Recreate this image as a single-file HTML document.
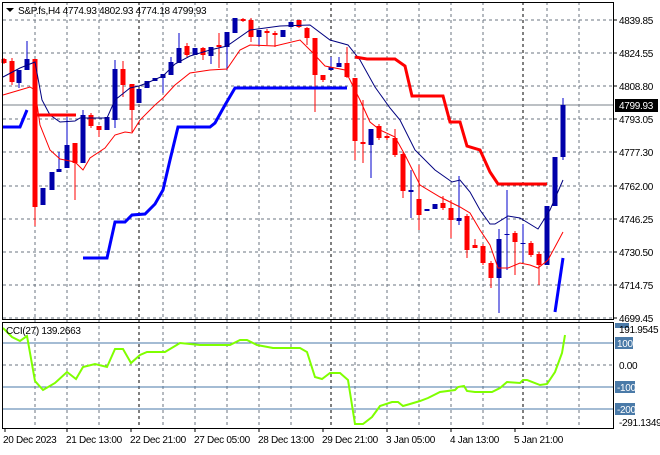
<!DOCTYPE html><html><head><style>
body{margin:0;background:#fff;width:660px;height:450px;overflow:hidden;font-family:"Liberation Sans",sans-serif}
svg text{font-family:"Liberation Sans",sans-serif;font-size:10px;letter-spacing:-0.3px}
</style></head><body>
<svg width="660" height="450" xmlns="http://www.w3.org/2000/svg">
<rect width="660" height="450" fill="#fff"/>
<g stroke="#6b7480" stroke-dasharray="3,3" stroke-width="1">
<path d="M3 20H613M3 53H613M3 86H613M3 119H613M3 152H613M3 186H613M3 219H613M3 252H613M3 285H613M3 318H613M3 365H613"/>
<path d="M35 2V428M67 2V428M99 2V428M163 2V428M195 2V428M227 2V428M259 2V428M291 2V428M355 2V428M387 2V428M419 2V428M451 2V428M483 2V428M547 2V428M579 2V428"/>
</g>
<g stroke="#000" stroke-dasharray="3,3"><path d="M139 2V428M331 2V428M523 2V428"/></g>
<g stroke="#4a7aa8"><path d="M3 343H613M3 387H613M3 409H613"/></g>
<path d="M3 105H613" stroke="#7a8088"/>
<g stroke-width="1">
<g fill="#f00" stroke="#f00">
<path d="M4 58V64M12 58V85M35 59V226M75 143V200M91 113V128M99 126V137M123 61V97M132 84V132M187 43V57M203 47V60M219 33V68M243 18V22M251 18V42M267 29V45M275 31V47M299 20V28M307 27V45M315 38V112M323 75V82M347 47V78M355 78V160M363 100V163M379 124V140M387 135V140M395 129V157M403 152V198M419 165V230M443 196V210M451 200V238M467 214V258M475 239V248M483 244V265M491 261V288M515 231V275M531 241V257M539 252V285"/>
</g>
<g fill="#f00">
<rect x="1.5" y="59" width="5" height="4"/><rect x="9.5" y="61" width="5" height="21"/><rect x="32.5" y="59" width="5" height="148"/><rect x="72.5" y="143" width="5" height="20"/><rect x="88.5" y="115" width="5" height="11"/><rect x="96.5" y="126" width="5" height="4"/><rect x="120.5" y="69" width="5" height="16"/><rect x="129.5" y="84" width="5" height="26"/><rect x="184.5" y="46" width="5" height="9"/><rect x="200.5" y="48" width="5" height="7"/><rect x="216.5" y="45" width="5" height="2"/><rect x="240.5" y="19" width="5" height="2"/><rect x="248.5" y="20" width="5" height="17"/><rect x="264.5" y="31" width="5" height="2"/><rect x="272.5" y="33" width="5" height="2"/><rect x="296.5" y="20" width="5" height="7"/><rect x="304.5" y="28" width="5" height="10"/><rect x="312.5" y="38" width="5" height="37"/><rect x="320.5" y="75" width="5" height="5"/><rect x="344.5" y="63" width="5" height="14"/><rect x="352.5" y="78" width="5" height="63"/><rect x="360.5" y="142" width="5" height="2"/><rect x="376.5" y="126" width="5" height="12"/><rect x="384.5" y="136" width="5" height="2"/><rect x="392.5" y="138" width="5" height="17"/><rect x="400.5" y="154" width="5" height="37"/><rect x="416.5" y="199" width="5" height="16"/><rect x="440.5" y="203" width="5" height="5"/><rect x="448.5" y="208" width="5" height="12"/><rect x="464.5" y="216" width="5" height="34"/><rect x="472.5" y="245" width="5" height="3"/><rect x="480.5" y="246" width="5" height="17"/><rect x="488.5" y="263" width="5" height="15"/><rect x="512.5" y="233" width="5" height="9"/><rect x="528.5" y="243" width="5" height="12"/><rect x="536.5" y="254" width="5" height="11"/>
</g>
<g stroke="#0000cc">
<path d="M19 70V88M27 41V70M43 188V205M52 172V190M59 152V172M67 117V168M83 110V163M107 117V130M115 60V128M139 89V103M147 81V88M155 78V80M163 74V93M171 57V75M179 33V63M195 48V55M211 47V64M227 32V70M235 18V33M259 30V46M283 30V37M291 22V27M331 57V70M339 57V66M371 129V178M411 170V218M427 209V211M435 204V209M459 176V225M499 229V313M507 190V270M523 224V262M547 206V265M555 157V206M563 98V160"/>
</g>
<g fill="#0000aa">
<rect x="16.5" y="70" width="5" height="13"/><rect x="24.5" y="59" width="5" height="11"/><rect x="40.5" y="188" width="5" height="17"/><rect x="49.5" y="172" width="5" height="18"/><rect x="56.5" y="169" width="5" height="3"/><rect x="64.5" y="145" width="5" height="23"/><rect x="80.5" y="115" width="5" height="48"/><rect x="104.5" y="117" width="5" height="13"/><rect x="112.5" y="69" width="5" height="51"/><rect x="136.5" y="89" width="5" height="14"/><rect x="144.5" y="81" width="5" height="7"/><rect x="152.5" y="78" width="5" height="3"/><rect x="160.5" y="74" width="5" height="4"/><rect x="168.5" y="62" width="5" height="13"/><rect x="176.5" y="48" width="5" height="15"/><rect x="192.5" y="48" width="5" height="7"/><rect x="208.5" y="47" width="5" height="9"/><rect x="224.5" y="32" width="5" height="15"/><rect x="232.5" y="18" width="5" height="15"/><rect x="256.5" y="30" width="5" height="7"/><rect x="280.5" y="30" width="5" height="7"/><rect x="288.5" y="22" width="5" height="5"/><rect x="328.5" y="67" width="5" height="3"/><rect x="336.5" y="63" width="5" height="4"/><rect x="368.5" y="129" width="5" height="16"/><rect x="408.5" y="190" width="5" height="2"/><rect x="424.5" y="209" width="5" height="2"/><rect x="432.5" y="204" width="5" height="5"/><rect x="456.5" y="218" width="5" height="3"/><rect x="496.5" y="239" width="5" height="39"/><rect x="504.5" y="234" width="5" height="1"/><rect x="520.5" y="243" width="5" height="1"/><rect x="544.5" y="206" width="5" height="59"/><rect x="552.5" y="157" width="5" height="49"/><rect x="560.5" y="105" width="5" height="52"/>
</g>
</g>
<polyline fill="none" stroke="#000080" stroke-width="1" points="3,77 20,68 35,62 42,100 50,115 60,122 75,121 80,118 107,118 115,100 130,88 139,86 147,83 163,76 175,64 190,56 210,50 227,46 250,30 280,26 310,25 330,40 348,45 360,60 375,87 390,108 400,120 415,150 435,170 452,182 460,180 470,192 480,210 490,224 495,224 508,216 520,218 538,229 550,210 563,180"/>
<polyline fill="none" stroke="#f00" stroke-width="1" points="3,95 20,90 30,87 35,90 40,125 50,150 60,159 75,162 83,170 90,158 105,148 115,135 125,132 132,133 140,120 155,105 163,98 175,85 190,73 210,70 227,69 240,50 250,45 275,46 300,40 312,52 325,66 345,70 360,100 370,122 380,130 395,137 405,155 420,185 440,197 460,207 470,213 480,230 490,245 498,268 508,268 520,263 530,265 538,268 548,260 563,232"/>
<polyline fill="none" stroke="#f00" stroke-width="3" points="35,115 76,115"/>
<polyline fill="none" stroke="#f00" stroke-width="3" points="355,57 367,59 395,59 405,66 412,96 443,96 450,122 460,122 467,146 480,150 490,172 498,184 547,184"/>
<polyline fill="none" stroke="#0000ff" stroke-width="3" points="3,127 20,127 27,110"/>
<polyline fill="none" stroke="#0000ff" stroke-width="3" points="83,258 107,258 115,222 125,222 132,215 145,214 155,204 163,190 170,160 178,127 210,127 215,123 225,105 235,88 347,88"/>
<polyline fill="none" stroke="#0000ff" stroke-width="3" points="555,312 563,258"/>
<polyline fill="none" stroke="#7fff00" stroke-width="2" points="3,328 12,337 20,341 27,336 35,381 43,390 55,383 67,372 76,379 83,367 95,364 107,367 115,349 123,349 131,363 140,355 147,352 165,352 180,343 200,345 230,345 240,340 247,340 257,345 273,348 300,348 307,352 315,377 322,379 330,373 340,373 348,380 355,424 363,424 372,417 380,406 392,402 398,402 403,406 410,404 420,401 428,398 440,392 455,390 458,387 464,386 467,391 475,392 492,392 500,388 507,382 520,383 523,380 527,380 540,385 547,384 555,372 562,353 565,335"/>
<g fill="none" stroke="#000"><rect x="2.5" y="2.5" width="611" height="317"/><rect x="2.5" y="322.5" width="611" height="106"/></g>
<g stroke="#000"><path d="M613 20h4M613 53h4M613 86h4M613 119h4M613 152h4M613 186h4M613 219h4M613 252h4M613 285h4M613 318h4M5 428v4M67 428v4M131 428v4M195 428v4M259 428v4M323 428v4M387 428v4M451 428v4M515 428v4"/></g>
<path d="M6 8h8l-4 4z" fill="#000"/>
<text x="18" y="14" fill="#000">S&amp;P.fs,H4  4774.93 4802.93 4774.18 4799.93</text>
<text x="6" y="334" fill="#000">CCI(27) 139.2663</text>
<g fill="#000">
<text x="619" y="24">4839.85</text><text x="619" y="57">4824.55</text><text x="619" y="90">4808.80</text><text x="619" y="123">4793.05</text><text x="619" y="156">4777.30</text><text x="619" y="190">4762.00</text><text x="619" y="223">4746.25</text><text x="619" y="256">4730.50</text><text x="619" y="289">4714.75</text><text x="619" y="322">4699.45</text>
</g>
<rect x="615" y="99" width="43" height="13" fill="#000"/>
<text x="619" y="109" fill="#fff">4799.93</text>
<rect x="615" y="323" width="14" height="5" fill="#4a7aa8"/>
<rect x="615" y="337" width="18" height="12" fill="#4a7aa8"/>
<rect x="615" y="381" width="20" height="12" fill="#4a7aa8"/>
<rect x="615" y="403" width="20" height="12" fill="#4a7aa8"/>
<text x="619" y="333" fill="#000">191.9545</text>
<text x="617" y="347" fill="#fff">100</text>
<text x="619" y="369" fill="#000">0.00</text>
<text x="617" y="391" fill="#fff">-100</text>
<text x="617" y="413" fill="#fff">-200</text>
<text x="619" y="426" fill="#000">-291.1349</text>
<g fill="#000">
<text x="3" y="443">20 Dec 2023</text><text x="66" y="443">21 Dec 13:00</text><text x="130" y="443">22 Dec 21:00</text><text x="194" y="443">27 Dec 05:00</text><text x="258" y="443">28 Dec 13:00</text><text x="322" y="443">29 Dec 21:00</text><text x="386" y="443">3 Jan 05:00</text><text x="450" y="443">4 Jan 13:00</text><text x="514" y="443">5 Jan 21:00</text>
</g>
</svg>
</body></html>
